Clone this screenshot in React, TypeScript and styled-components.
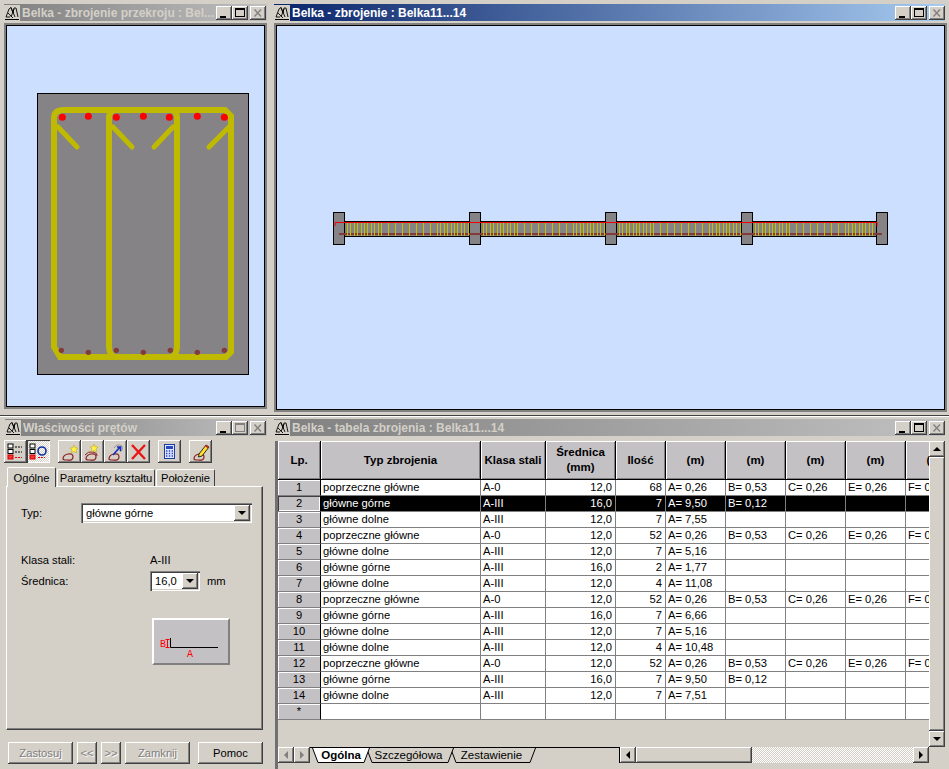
import React from "react";
import styled, { createGlobalStyle } from "styled-components";

const FONT = `"Liberation Sans", Arial, sans-serif`;
const FACE = "#d4d0c8";
const SKY = "#cddfff";
const DITHER = `repeating-conic-gradient(#ffffff 0 25%, ${FACE} 0 50%) 0 0 / 2px 2px`;

const Global = createGlobalStyle`
  html, body { margin: 0; padding: 0; background: ${FACE}; overflow: hidden; }
  #root { width: 949px; height: 769px; }
`;

const Desktop = styled.div`
  display: grid;
  grid-template-columns: 272px 677px;
  grid-template-rows: 415px 354px;
  width: 949px;
  height: 769px;
  font-family: ${FONT};
  font-size: 11px;
  color: #000;
  background: ${FACE};
`;

const Win = styled.section<{ $left?: boolean; $lower?: boolean }>`
  display: flex;
  flex-direction: column;
  min-width: 0;
  min-height: 0;
  box-sizing: border-box;
  background: ${FACE};
  padding-top: ${(p) => (p.$lower ? "3px" : "4px")};
  padding-right: ${(p) => (p.$left ? "5px" : "2px")};
  padding-bottom: ${(p) => (p.$lower ? "0" : p.$left ? "6px" : "3px")};
  padding-left: ${(p) => (p.$left ? (p.$lower ? "5px" : "4px") : "2px")};
  border-top: ${(p) => (p.$lower ? "1px solid #404040" : "0")};
  box-shadow: ${(p) => (p.$lower ? "inset 0 1px #fff" : "none")};
`;

const Title = styled.header<{ $active?: boolean; $flush?: boolean }>`
  flex: none;
  display: flex;
  align-items: center;
  height: 17px;
  margin-right: ${(p) => (p.$flush ? "0" : "2px")};
  padding-right: ${(p) => (p.$flush ? "1px" : "0")};
  background: ${(p) =>
    p.$active
      ? "linear-gradient(90deg, #0a246a 0%, #a6caf0 100%)"
      : "linear-gradient(90deg, #808080 0%, #c0c0c0 100%)"};
`;

const TitleIcon = styled.span`
  flex: none;
  width: 16px;
  height: 16px;
  margin-right: 2px;
  background: ${FACE};
  display: flex;
`;

const TitleText = styled.span<{ $active?: boolean }>`
  flex: 1;
  min-width: 0;
  white-space: nowrap;
  overflow: hidden;
  font-weight: 700;
  font-size: 12px;
  color: ${(p) => (p.$active ? "#fff" : FACE)};
`;

const Raised = `
  background: ${FACE};
  box-shadow: inset -1px -1px #404040, inset 1px 1px #fff, inset -2px -2px #808080, inset 2px 2px ${FACE};
`;

const CapBtn = styled.span<{ $gap?: boolean }>`
  flex: none;
  width: 16px;
  height: 14px;
  margin-left: ${(p) => (p.$gap ? "2px" : "0")};
  display: flex;
  ${Raised}
`;

const Client = styled.div`
  flex: 1;
  min-height: 0;
  margin-top: 2px;
  border: 2px solid #808080;
  display: flex;
  background: #000;
  padding: 1px;
`;

const ViewA = styled.div`
  flex: 1;
  min-width: 0;
  background: ${SKY};
  padding: 67px 0 0 30px;
`;

const ViewB = styled.div`
  flex: 1;
  min-width: 0;
  background: ${SKY};
`;

const Sheet = styled.svg`
  display: block;
`;

/* ---------- property window ---------- */

const Toolbar = styled.div`
  flex: none;
  display: flex;
  align-items: center;
  height: 23px;
  margin: 4px 0 0 -1px;
`;

const ToolGroup = styled.div<{ $gap?: number }>`
  display: flex;
  margin-right: ${(p) => p.$gap ?? 0}px;
`;

const ToolBtn = styled.span<{ $on?: boolean }>`
  width: 23px;
  height: 23px;
  display: flex;
  align-items: center;
  justify-content: center;
  background: ${(p) => (p.$on ? DITHER : FACE)};
  box-shadow: ${(p) =>
    p.$on
      ? "inset 1px 1px #404040, inset -1px -1px #fff"
      : "inset -1px -1px #404040, inset 1px 1px #fff, inset -2px -2px #808080"};
`;

const Tabs = styled.div`
  flex: none;
  display: flex;
  align-items: flex-end;
  height: 20px;
  margin: 3px 0 0 2px;
  position: relative;
  z-index: 1;
`;

const Tab = styled.span<{ $on?: boolean; $w: number }>`
  box-sizing: border-box;
  width: ${(p) => p.$w}px;
  height: ${(p) => (p.$on ? "20px" : "17px")};
  padding-top: ${(p) => (p.$on ? "3px" : "1px")};
  margin-right: 1px;
  margin-bottom: ${(p) => (p.$on ? "-1px" : "0")};
  text-align: center;
  white-space: nowrap;
  font-size: 11.2px;
  line-height: 14px;
  background: ${FACE};
  border-top: 1px solid #fff;
  border-left: 1px solid #fff;
  border-right: 1px solid #404040;
  border-radius: 2px 2px 0 0;
`;

const Panel = styled.div`
  box-sizing: border-box;
  height: 244px;
  width: 257px;
  margin-left: 1px;
  padding: 16px 0 0 14px;
  border-top: 1px solid #fff;
  border-left: 1px solid #fff;
  border-right: 1px solid #404040;
  border-bottom: 1px solid #404040;
  box-shadow: inset -1px -1px #808080;
`;

const FormRow = styled.div<{ $label: number; $top: number; $h: number }>`
  display: grid;
  grid-template-columns: ${(p) => p.$label}px auto auto;
  justify-content: start;
  align-items: center;
  height: ${(p) => p.$h}px;
  margin-top: ${(p) => p.$top}px;
  font-size: 11.2px;
`;

const Sunken = styled.div<{ $w: number }>`
  box-sizing: border-box;
  width: ${(p) => p.$w}px;
  height: 20px;
  background: #fff;
  display: flex;
  align-items: center;
  justify-content: space-between;
  padding: 2px 2px 2px 5px;
  font-size: 11.2px;
  box-shadow: inset 1px 1px #808080, inset 2px 2px #404040, inset -1px -1px #fff, inset -2px -2px ${FACE};
`;

const DropBtn = styled.span`
  flex: none;
  width: 16px;
  height: 16px;
  display: flex;
  align-items: center;
  justify-content: center;
  ${Raised}
`;

const Down = styled.i`
  display: block;
  width: 0;
  height: 0;
  border-left: 4px solid transparent;
  border-right: 4px solid transparent;
  border-top: 4px solid #000;
`;

const Unit = styled.span`
  margin-left: 7px;
`;

const Preview = styled.div`
  box-sizing: border-box;
  width: 78px;
  height: 47px;
  margin: 27px 0 0 131px;
  background: #c4c1c5;
  border-top: 2px solid #fff;
  border-left: 2px solid #fff;
  border-right: 2px solid #808080;
  border-bottom: 2px solid #808080;
  display: flex;
`;

const Footer = styled.div`
  flex: none;
  display: flex;
  margin: 12px 0 0 3px;
`;

const PushBtn = styled.span<{ $w: number; $off?: boolean; $ml?: number }>`
  box-sizing: border-box;
  width: ${(p) => p.$w}px;
  height: 22px;
  margin-left: ${(p) => p.$ml ?? 0}px;
  display: flex;
  align-items: center;
  justify-content: center;
  font-size: 11.2px;
  color: ${(p) => (p.$off ? "#808080" : "#000")};
  text-shadow: ${(p) => (p.$off ? "1px 1px #fff" : "none")};
  ${Raised}
`;

/* ---------- table window ---------- */

const TableClient = styled.div`
  flex: 1;
  min-height: 0;
  margin: 5px 2px 0 1px;
  border-left: 3px solid #707070;
  display: flex;
  flex-direction: column;
`;

const TableRow = styled.div`
  display: flex;
  height: 306px;
  flex: none;
`;

const GridArea = styled.div`
  width: 651px;
  overflow: hidden;
  background: ${FACE};
`;

const Grid = styled.table`
  border-collapse: separate;
  border-spacing: 0;
  table-layout: fixed;
  width: 688px;
  font-family: ${FONT};
  font-size: 11.2px;
`;

const Th = styled.th<{ $w: number }>`
  box-sizing: border-box;
  width: ${(p) => p.$w}px;
  height: 39px;
  padding: 0;
  background: #c4c1c5;
  font-weight: 700;
  font-size: 11.5px;
  line-height: 15px;
  text-align: center;
  border-right: 1px solid #000;
  border-bottom: 1px solid #000;
  box-shadow: inset 1px 1px #fff, inset -1px -1px #808080;
`;

const RowHead = styled.td<{ $sel?: boolean }>`
  box-sizing: border-box;
  height: 16px;
  padding: 0;
  text-align: center;
  background: #c4c1c5;
  border-right: 1px solid #000;
  border-bottom: 1px solid #808080;
  box-shadow: ${(p) =>
    p.$sel ? "inset 1px 1px #404040, inset -1px -1px #fff" : "inset 1px 1px #fff"};
  line-height: 15px;
`;

const Td = styled.td<{ $sel?: boolean; $num?: boolean }>`
  box-sizing: border-box;
  height: 16px;
  padding: 0 ${(p) => (p.$num ? "3px" : "1px")} 0 ${(p) => (p.$num ? "0" : "2px")};
  background: ${(p) => (p.$sel ? "#000" : "#fff")};
  color: ${(p) => (p.$sel ? "#fff" : "#000")};
  text-align: ${(p) => (p.$num ? "right" : "left")};
  border-right: 1px solid #808080;
  border-bottom: 1px solid #808080;
  line-height: 15px;
  white-space: nowrap;
  overflow: hidden;
`;

const VBar = styled.div`
  width: 16px;
  display: flex;
  flex-direction: column;
  background: ${DITHER};
`;

const ScrollBtn = styled.span<{ $w?: number }>`
  flex: none;
  width: ${(p) => p.$w ?? 16}px;
  height: 16px;
  display: flex;
  align-items: center;
  justify-content: center;
  ${Raised}
`;

const VThumb = styled.span`
  flex: none;
  height: 274px;
  ${Raised}
`;

const Spacer = styled.span`
  flex: 1;
`;

const Up = styled.i`
  display: block;
  width: 0;
  height: 0;
  border-left: 4px solid transparent;
  border-right: 4px solid transparent;
  border-bottom: 4px solid #000;
`;

const Lft = styled.i<{ $off?: boolean }>`
  display: block;
  width: 0;
  height: 0;
  border-top: 4px solid transparent;
  border-bottom: 4px solid transparent;
  border-right: 4px solid ${(p) => (p.$off ? "#808080" : "#000")};
`;

const Rgt = styled.i<{ $off?: boolean }>`
  display: block;
  width: 0;
  height: 0;
  border-top: 4px solid transparent;
  border-bottom: 4px solid transparent;
  border-left: 4px solid ${(p) => (p.$off ? "#808080" : "#000")};
`;

const Strip = styled.div`
  flex: none;
  display: flex;
  height: 16px;
  width: 667px;
`;

const SheetTabs = styled.div`
  display: flex;
  width: 342px;
  height: 16px;
  box-sizing: border-box;
  align-items: stretch;
`;

const Sheets = styled.div`
  flex: 1;
  display: flex;
  padding-left: 2px;
  border-top: 1px solid #000;
  border-right: 1px solid #000;
`;

const SheetTab = styled.span<{ $w: number; $on?: boolean; $z: number }>`
  position: relative;
  box-sizing: border-box;
  width: ${(p) => p.$w}px;
  margin-right: -4px;
  padding-right: ${(p) => (p.$on ? "0" : "3px")};
  z-index: ${(p) => p.$z};
  text-align: center;
  font-size: 11.5px;
  line-height: 14px;
  font-weight: ${(p) => (p.$on ? 700 : 400)};
`;

const SheetShape = styled.svg`
  position: absolute;
  inset: 0;
  width: 100%;
  height: 100%;
`;

const SheetLabel = styled.span`
  position: relative;
`;

const HBar = styled.div`
  display: flex;
  width: 309px;
  background: ${DITHER};
  height: 16px;
`;

const HThumb = styled.span`
  flex: none;
  width: 116px;
  ${Raised}
`;

const Corner = styled.span`
  flex: 1;
  background: ${FACE};
`;

/* ---------- drawings ---------- */

const Logo = () => (
  <svg width="16" height="16" viewBox="0 0 16 16" fill="none" stroke="#000" strokeWidth="0.9">
    <path d="M2 12 L5 4 L7 2.5 L9 8 L10 3 L12 3 L14 12 M4 8 L9 13 M7 2.5 L11 12 M10 4 L7 12 M2 12 H6" />
    <path d="M1 14.5 H15" strokeWidth="1" />
  </svg>
);

const Min = () => (
  <svg width="16" height="14">
    <rect x="4" y="10" width="6" height="2" fill="#000" />
  </svg>
);
const Max = ({ off }: { off?: boolean }) => (
  <svg width="16" height="14" fill="none" stroke={off ? "#808080" : "#000"}>
    <rect x="3.5" y="2.5" width="9" height="8" />
    <path d="M3 3.5 H13" />
  </svg>
);
const Cls = () => (
  <svg width="16" height="14" fill="none" stroke="#808080" strokeWidth="1.4">
    <path d="M4.5 3.5 L11 10.5 M11 3.5 L4.5 10.5" />
  </svg>
);

const Caps = ({ maxOff }: { maxOff?: boolean }) => (
  <>
    <CapBtn><Min /></CapBtn>
    <CapBtn><Max off={maxOff} /></CapBtn>
    <CapBtn $gap><Cls /></CapBtn>
  </>
);

const CrossSection = () => {
  const yel = "#bfba00";
  const top = [97, 175, 259, 340, 418, 502, 583];
  const topY = [82, 79, 82, 79, 82, 79, 82];
  const bot = [94, 175, 259, 340, 421, 502, 583];
  const botY = [781, 787, 781, 787, 781, 787, 781];
  return (
    <Sheet width="212" height="282" viewBox="37 93 212 282">
      <rect x="37.5" y="93.5" width="211" height="281" fill="#858386" stroke="#000" />
      <g fill="none" stroke={yel} strokeWidth="6">
        <path d="M64 110 H225 L231 116 V352 L226 357 H60 L54 347 V118 Q54 110 64 110 Z" />
        <path d="M114 357 Q109 354 109 346 V118 Q109 110 116 110" />
        <path d="M172 357 Q177 354 177 346 V118 Q177 110 170 110" />
      </g>
      <g stroke={yel} strokeWidth="5" strokeLinecap="round">
        <path d="M58 127 L77 147" />
        <path d="M113 127 L132 147" />
        <path d="M173 127 L154 147" />
        <path d="M229 127 L209 147" />
      </g>
      {top.map((x, i) => (
        <circle key={x} cx={30 + x / 3} cy={90 + topY[i] / 3} r="3.5" fill="#ff0000" />
      ))}
      {bot.map((x, i) => (
        <circle key={x} cx={30 + x / 3} cy={90 + botY[i] / 3} r="2.7" fill="#823a3a" />
      ))}
    </Sheet>
  );
};

const spanBars = (s: number, e: number) => {
  const out: number[] = [];
  let x = s + 2;
  while (x < e - 1) {
    out.push(Math.round(x) + 0.5);
    const d = Math.min(x - s, e - x);
    x += d < 34 ? 3.4 : 7;
  }
  return out;
};

const Elevation = () => {
  const supports = [333, 469, 605, 741, 876];
  const bars = supports.slice(0, -1).flatMap((s, i) => spanBars(s + 12, supports[i + 1]));
  return (
    <Sheet width="667" height="383" viewBox="277 26 667 383">
      <rect x="339.5" y="221.5" width="542" height="15" fill="#858386" stroke="#000" />
      <path d="M339 234 H882" stroke="#823a3a" strokeWidth="2" />
      {bars.map((x) => (
        <path key={x} d={`M${x} 222 V236`} stroke="#c4c000" />
      ))}
      {supports.map((x) => (
        <rect key={x} x={x + 0.5} y="212.5" width="11" height="32" fill="#858386" stroke="#000" />
      ))}
      <path d="M339 234 H345 M469 234 H481 M605 234 H617 M741 234 H753 M876 234 H882" stroke="#823a3a" strokeWidth="2" />
      <path d="M335 226 V222.5 H877 V226" fill="none" stroke="#ee0000" />
    </Sheet>
  );
};

const Loop = () => (
  <path d="M3 17 Q3 13 8 12 Q13 11 13 15 Q13 19 7 18 Q3 18 3 17" fill="none" stroke="#8a1c1c" strokeWidth="1.2" />
);
const Star = ({ x = 10, y = 3 }: { x?: number; y?: number }) => (
  <path
    transform={`translate(${x} ${y})`}
    d="M4 0 L5.2 2.8 L8 3 L6 5 L6.8 8 L4 6.4 L1.2 8 L2 5 L0 3 L2.8 2.8 Z"
    fill="#fff04a"
    stroke="#b8a000"
    strokeWidth="0.5"
  />
);
const ListIcon = () => (
  <svg width="19" height="19" viewBox="0 0 19 19">
    <rect x="2" y="2" width="5" height="4" fill="#fff" stroke="#000" />
    <path d="M9 5 H16" stroke="#000" strokeDasharray="2 1" />
    <rect x="2" y="7.5" width="5" height="4" fill="#fff" stroke="#000" />
    <path d="M9 10 H16" stroke="#000" strokeDasharray="2 1" />
    <rect x="2" y="13" width="5" height="4" fill="#f33" stroke="#c00" />
    <path d="M9 15.5 H16" stroke="#e00" strokeDasharray="2 1" />
  </svg>
);
const CircleIcon = () => (
  <svg width="19" height="19" viewBox="0 0 19 19">
    <rect x="1" y="2" width="5" height="4" fill="#fff" stroke="#000" />
    <rect x="1" y="7.5" width="5" height="4" fill="#fff" stroke="#000" />
    <rect x="1" y="13" width="5" height="4" fill="#f33" stroke="#c00" />
    <circle cx="13" cy="9" r="4" fill="none" stroke="#1030a0" strokeWidth="1.6" />
    <path d="M9 15.5 H16" stroke="#e00" strokeDasharray="2 1" />
  </svg>
);
const StarIcon = () => (
  <svg width="19" height="19" viewBox="0 0 19 19"><Loop /><Star /></svg>
);
const StarsIcon = () => (
  <svg width="19" height="19" viewBox="0 0 19 19">
    <Loop />
    <path d="M2 13 Q5 9 10 10 Q15 11 14 14" fill="none" stroke="#8a1c1c" />
    <Star x={7} y={2} />
  </svg>
);
const MoveIcon = () => (
  <svg width="19" height="19" viewBox="0 0 19 19">
    <Loop />
    <path d="M8 6 Q11 1 16 4 Q18 8 14 10" fill="none" stroke="#a09098" />
    <path d="M7 13 L14 5 M11 5 H14.5 V9" fill="none" stroke="#1030c0" strokeWidth="1.6" />
  </svg>
);
const Cross = () => (
  <svg width="19" height="19" viewBox="0 0 19 19">
    <path d="M3 3 L16 17 M16 3 L3 17" stroke="#e81818" strokeWidth="2.4" />
  </svg>
);
const Calc = () => (
  <svg width="19" height="19" viewBox="0 0 19 19">
    <rect x="4.5" y="2.5" width="10" height="14" fill="#dfe6ff" stroke="#1c3ca0" />
    <rect x="6" y="4" width="7" height="3" fill="#2848c0" />
    <path d="M6 9 H13 M6 11.5 H13 M6 14 H13" stroke="#2848c0" strokeWidth="1.4" strokeDasharray="1.4 1.4" />
  </svg>
);
const Pencil = () => (
  <svg width="19" height="19" viewBox="0 0 19 19">
    <Loop />
    <path d="M8 12 L15 3 L18 5 L11 14 L7.5 15 Z" fill="#ffe030" stroke="#000" strokeWidth="0.8" />
    <path d="M15 3 L18 5 L17 6.5 L14 4.3 Z" fill="#d02020" />
  </svg>
);

const Shape = () => (
  <svg width="74" height="43" viewBox="0 0 74 43">
    <path d="M16.5 18 V27.5 H64" fill="none" stroke="#000" strokeWidth="1" />
    <path d="M11.5 19.5 H15.5 M13.5 19.5 V27 M11.5 27.5 H15.5" stroke="#f00" fill="none" />
    <text x="6" y="27" fontSize="10" fontFamily={`"Liberation Mono", monospace`} fill="#f00">B</text>
    <text x="33" y="37" fontSize="10" fontFamily={`"Liberation Mono", monospace`} fill="#f00">A</text>
  </svg>
);

const SheetPath = ({ w, on }: { w: number; on?: boolean }) => (
  <SheetShape viewBox={`0 0 ${w} 15`} preserveAspectRatio="none">
    <path
      d={`M0.5 0 L6 14.5 H${w - 6} L${w - 0.5} 0`}
      fill={on ? "#fff" : FACE}
      stroke="#000"
    />
  </SheetShape>
);

/* ---------- data ---------- */

const S = "poprzeczne główne";
const G = "główne górne";
const D = "główne dolne";
const stir = ["A= 0,26", "B= 0,53", "C= 0,26", "E= 0,26", "F= 0,26"];
const rows: [string, string, string, string, string[]][] = [
  [S, "A-0", "12,0", "68", stir],
  [G, "A-III", "16,0", "7", ["A= 9,50", "B= 0,12"]],
  [D, "A-III", "12,0", "7", ["A= 7,55"]],
  [S, "A-0", "12,0", "52", stir],
  [D, "A-III", "12,0", "7", ["A= 5,16"]],
  [G, "A-III", "16,0", "2", ["A= 1,77"]],
  [D, "A-III", "12,0", "4", ["A= 11,08"]],
  [S, "A-0", "12,0", "52", stir],
  [G, "A-III", "16,0", "7", ["A= 6,66"]],
  [D, "A-III", "12,0", "7", ["A= 5,16"]],
  [D, "A-III", "12,0", "4", ["A= 10,48"]],
  [S, "A-0", "12,0", "52", stir],
  [G, "A-III", "16,0", "7", ["A= 9,50", "B= 0,12"]],
  [D, "A-III", "12,0", "7", ["A= 7,51"]],
];
const heads: [string, number][] = [
  ["Lp.", 43],
  ["Typ zbrojenia", 160],
  ["Klasa stali", 65],
  ["Średnica (mm)", 70],
  ["Ilość", 50],
  ["(m)", 60],
  ["(m)", 60],
  ["(m)", 60],
  ["(m)", 60],
  ["(m)", 60],
];
const slots = [0, 1, 2, 3, 4];

export default function App() {
  return (
    <Desktop>
      <Global />
      <Win $left>
        <Title $flush>
          <TitleIcon><Logo /></TitleIcon>
          <TitleText>Belka - zbrojenie przekroju : Bel...</TitleText>
          <Caps />
        </Title>
        <Client>
          <ViewA><CrossSection /></ViewA>
        </Client>
      </Win>

      <Win>
        <Title $active>
          <TitleIcon><Logo /></TitleIcon>
          <TitleText $active>Belka - zbrojenie : Belka11...14</TitleText>
          <Caps />
        </Title>
        <Client>
          <ViewB><Elevation /></ViewB>
        </Client>
      </Win>

      <Win $left $lower>
        <Title $flush>
          <TitleIcon><Logo /></TitleIcon>
          <TitleText>Właściwości prętów</TitleText>
          <Caps maxOff />
        </Title>
        <Toolbar>
          <ToolGroup $gap={8}>
            <ToolBtn><ListIcon /></ToolBtn>
            <ToolBtn $on><CircleIcon /></ToolBtn>
          </ToolGroup>
          <ToolGroup $gap={8}>
            <ToolBtn><StarIcon /></ToolBtn>
            <ToolBtn><StarsIcon /></ToolBtn>
            <ToolBtn><MoveIcon /></ToolBtn>
            <ToolBtn><Cross /></ToolBtn>
          </ToolGroup>
          <ToolGroup $gap={8}>
            <ToolBtn><Calc /></ToolBtn>
          </ToolGroup>
          <ToolGroup>
            <ToolBtn><Pencil /></ToolBtn>
          </ToolGroup>
        </Toolbar>
        <Tabs>
          <Tab $on $w={49}>Ogólne</Tab>
          <Tab $w={98}>Parametry kształtu</Tab>
          <Tab $w={59}>Położenie</Tab>
        </Tabs>
        <Panel>
          <FormRow $label={60} $top={0} $h={20}>
            <span>Typ:</span>
            <Sunken $w={171}>
              główne górne
              <DropBtn><Down /></DropBtn>
            </Sunken>
          </FormRow>
          <FormRow $label={129} $top={30} $h={14}>
            <span>Klasa stali:</span>
            <span>A-III</span>
          </FormRow>
          <FormRow $label={129} $top={4} $h={20}>
            <span>Średnica:</span>
            <Sunken $w={50}>
              16,0
              <DropBtn><Down /></DropBtn>
            </Sunken>
            <Unit>mm</Unit>
          </FormRow>
          <Preview><Shape /></Preview>
        </Panel>
        <Footer>
          <PushBtn $w={65} $off>Zastosuj</PushBtn>
          <PushBtn $w={20} $off $ml={4}>&lt;&lt;</PushBtn>
          <PushBtn $w={20} $off $ml={4}>&gt;&gt;</PushBtn>
          <PushBtn $w={65} $off $ml={4}>Zamknij</PushBtn>
          <PushBtn $w={65} $ml={8}>Pomoc</PushBtn>
        </Footer>
      </Win>

      <Win $lower>
        <Title>
          <TitleIcon><Logo /></TitleIcon>
          <TitleText>Belka - tabela zbrojenia : Belka11...14</TitleText>
          <Caps />
        </Title>
        <TableClient>
          <TableRow>
            <GridArea>
              <Grid>
                <thead>
                  <tr>
                    {heads.map(([h, w], i) => (
                      <Th key={i} $w={w}>{h}</Th>
                    ))}
                  </tr>
                </thead>
                <tbody>
                  {rows.map(([typ, kl, sr, il, vals], i) => {
                    const sel = i === 1;
                    return (
                      <tr key={i}>
                        <RowHead $sel={sel}>{i + 1}</RowHead>
                        <Td $sel={sel}>{typ}</Td>
                        <Td $sel={sel}>{kl}</Td>
                        <Td $sel={sel} $num>{sr}</Td>
                        <Td $sel={sel} $num>{il}</Td>
                        {slots.map((k) => (
                          <Td key={k} $sel={sel}>{vals[k] ?? ""}</Td>
                        ))}
                      </tr>
                    );
                  })}
                  <tr>
                    <RowHead>*</RowHead>
                    <Td /><Td /><Td /><Td />
                    {slots.map((k) => <Td key={k} />)}
                  </tr>
                </tbody>
              </Grid>
            </GridArea>
            <VBar>
              <ScrollBtn><Up /></ScrollBtn>
              <VThumb />
              <Spacer />
              <ScrollBtn><Down /></ScrollBtn>
            </VBar>
          </TableRow>
          <Strip>
            <SheetTabs>
              <ScrollBtn><Lft $off /></ScrollBtn>
              <ScrollBtn><Rgt $off /></ScrollBtn>
              <Sheets>
                <SheetTab $w={58} $z={3} $on>
                  <SheetPath w={58} on />
                  <SheetLabel>Ogólna</SheetLabel>
                </SheetTab>
                <SheetTab $w={88} $z={2}>
                  <SheetPath w={88} />
                  <SheetLabel>Szczegółowa</SheetLabel>
                </SheetTab>
                <SheetTab $w={86} $z={1}>
                  <SheetPath w={86} />
                  <SheetLabel>Zestawienie</SheetLabel>
                </SheetTab>
              </Sheets>
            </SheetTabs>
            <HBar>
              <ScrollBtn><Lft /></ScrollBtn>
              <HThumb />
              <Spacer />
              <ScrollBtn><Rgt /></ScrollBtn>
            </HBar>
            <Corner />
          </Strip>
        </TableClient>
      </Win>
    </Desktop>
  );
}
